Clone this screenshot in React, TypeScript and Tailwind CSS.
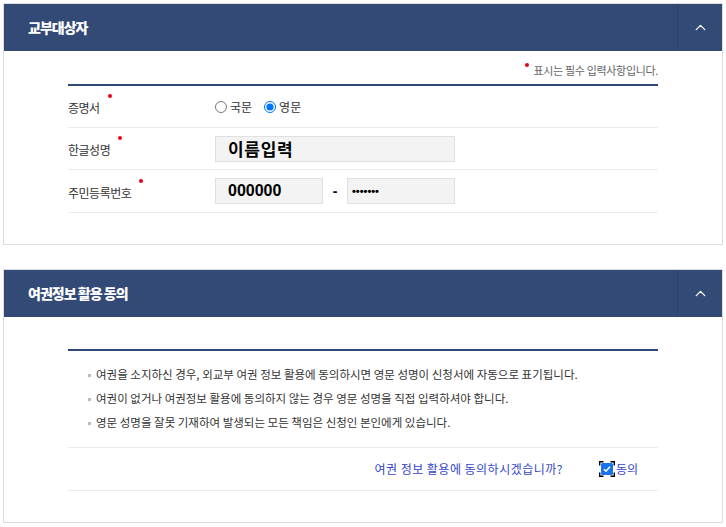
import { ChevronUp } from 'lucide-react';

const FONT = "font-['Malgun_Gothic','Noto_Sans_CJK_KR','Noto_Sans',sans-serif]";

const NOTES = [
  '여권을 소지하신 경우, 외교부 여권 정보 활용에 동의하시면 영문 성명이 신청서에 자동으로 표기됩니다.',
  '여권이 없거나 여권정보 활용에 동의하지 않는 경우 영문 성명을 직접 입력하셔야 합니다.',
  '영문 성명을 잘못 기재하여 발생되는 모든 책임은 신청인 본인에게 있습니다.',
];

function PanelHeader({ title }: { title: string }) {
  return (
    <div className="flex h-[47px] items-center bg-[#344a76]">
      <h2 className="flex-1 pl-6 text-[14px] font-extrabold tracking-[-0.07em] text-white">{title}</h2>
      <button className="flex h-full w-[45px] items-center justify-center border-l border-[#2d4168] text-white">
        <ChevronUp size={17} strokeWidth={1.8} />
      </button>
    </div>
  );
}

function Dot({ className = '' }: { className?: string }) {
  return <span className={`inline-block h-[4px] w-[4px] rounded-full bg-[#e60012] ${className}`} />;
}

function Label({ text }: { text: string }) {
  return (
    <div className="flex w-[147px] items-start text-[12px] tracking-[-0.04em] text-[#333]">
      <span className="pt-[3px]">{text}</span>
      <Dot className="ml-[8px] -mt-[2px]" />
    </div>
  );
}

function Field({ children, className = '' }: { children: React.ReactNode; className?: string }) {
  return (
    <div className={`flex h-[26px] items-center border border-[#e0e0e0] bg-[#f3f3f3] pl-3 font-bold text-black ${className}`}>
      {children}
    </div>
  );
}

function CheckIcon() {
  return (
    <svg width="16" height="16" viewBox="0 0 16 16">
      <rect x="2" y="2" width="12" height="12" rx="1.5" fill="#1a73e8" />
      <path d="M5 8.2l2 2 4-4.4" fill="none" stroke="#fff" strokeWidth="1.6" />
      <path d="M0.7 4.5V0.7H4.5M11.5 0.7H15.3V4.5M15.3 11.5V15.3H11.5M4.5 15.3H0.7V11.5" fill="none" stroke="#000" strokeWidth="1.4" />
    </svg>
  );
}

export default function App() {
  return (
    <div className={`min-h-[527px] bg-white p-[3px] ${FONT}`}>
      {/* 교부대상자 */}
      <section className="border border-[#dcdcdc]">
        <PanelHeader title="교부대상자" />
        <div className="px-[64px] pb-[31px] pt-[7px]">
          <div className="flex h-[26px] items-start justify-end text-[11px] tracking-[-0.03em] text-[#666]">
            <Dot className="mr-[5px] mt-[5px]" />
            <span className="pt-[4px]">표시는 필수 입력사항입니다.</span>
          </div>
          <div className="border-t-2 border-[#2f4a78]">
            <div className="flex h-[42px] items-center border-b border-[#ebebeb]">
              <Label text="증명서" />
              <div className="flex items-center gap-1 text-[12px] text-[#333]">
                <label className="flex items-center gap-[3px]">
                  <input type="radio" name="cert" className="m-0 h-[12px] w-[12px]" />
                  국문
                </label>
                <label className="ml-[8px] flex items-center gap-[3px]">
                  <input type="radio" name="cert" defaultChecked className="m-0 h-[12px] w-[12px]" />
                  영문
                </label>
              </div>
            </div>
            <div className="flex h-[42px] items-center border-b border-[#ebebeb]">
              <Label text="한글성명" />
              <Field className="w-[240px] text-[17px] tracking-[0.04em]">이름입력</Field>
            </div>
            <div className="flex h-[43px] items-center border-b border-[#ebebeb]">
              <Label text="주민등록번호" />
              <Field className="w-[108px] font-['Liberation_Sans',Arial,sans-serif] text-[16px]">000000</Field>
              <span className="w-[24px] text-center font-['Liberation_Sans',Arial,sans-serif] text-[14px] font-bold">-</span>
              <Field className="w-[108px] pl-[4px] font-['Liberation_Sans',Arial,sans-serif] text-[11px]">•••••••</Field>
            </div>
          </div>
        </div>
      </section>

      {/* 여권정보 활용 동의 */}
      <section className="mt-[24px] border border-[#dcdcdc]">
        <PanelHeader title="여권정보 활용 동의" />
        <div className="px-[64px] pb-[31px] pt-[32px]">
          <div className="border-t-2 border-[#2f4a78]">
            <ul className="pb-[12px] pl-[20px] pt-[12px] text-[11.5px] text-[#333]">
              {NOTES.map((note) => (
                <li key={note} className="flex h-[24px] items-center">
                  <span className="mr-[5px] h-[3px] w-[3px] bg-[#bbb]" />
                  {note}
                </li>
              ))}
            </ul>
            <div className="flex h-[44px] items-center justify-end border-y border-[#ebebeb] pr-[20px] text-[12px] text-[#3446c9]">
              <span className="tracking-[0.04em]">여권 정보 활용에 동의하시겠습니까?</span>
              <label className="ml-[36px] flex items-center gap-[1px]">
                <CheckIcon />
                동의
              </label>
            </div>
          </div>
        </div>
      </section>
    </div>
  );
}
